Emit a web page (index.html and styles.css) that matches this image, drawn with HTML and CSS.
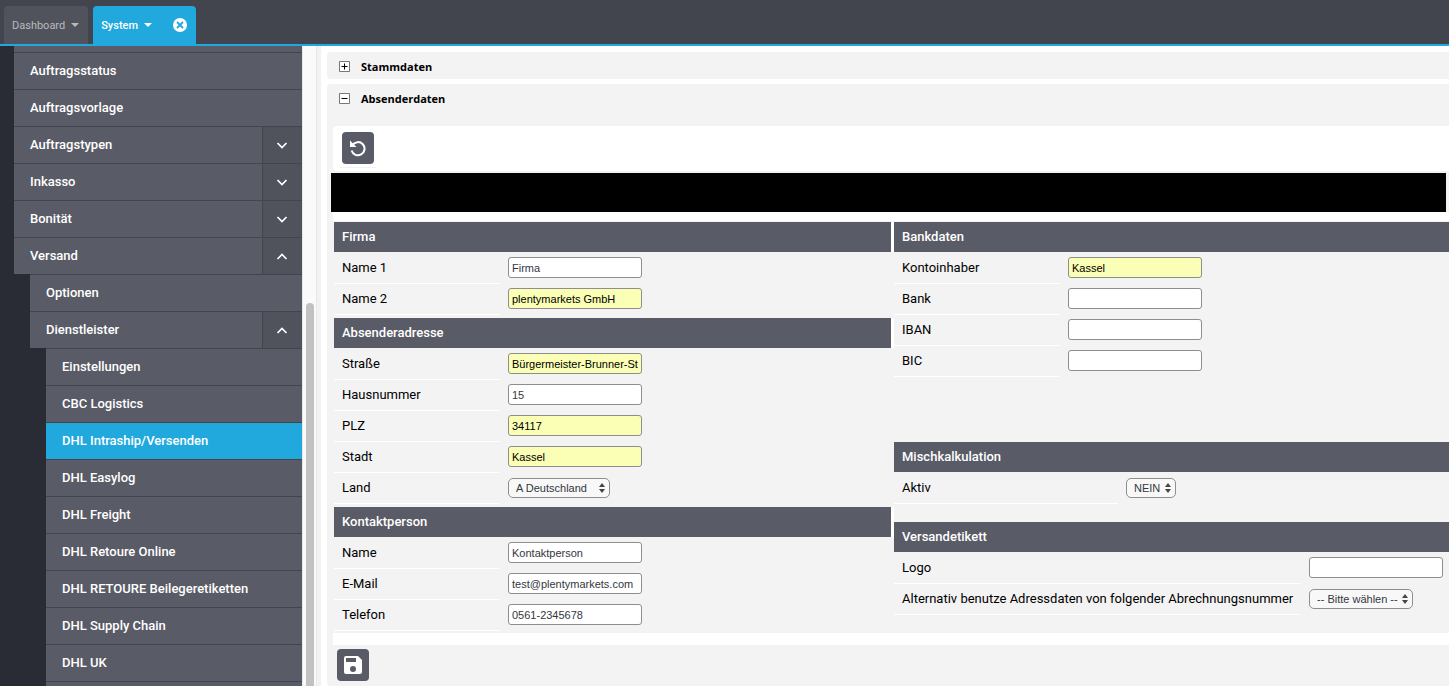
FILE: index.html
```html
<!DOCTYPE html>
<html lang="de">
<head>
    <meta charset="UTF-8">
    <meta name="viewport" content="width=device-width, initial-scale=1.0">
    <title>System - DHL Intraship/Versenden</title>
    <link rel="stylesheet" href="styles.css">
</head>
<body>
    <header class="tabs">
        <div class="tab">
            <button class="tab-label">Dashboard <span class="caret"></span></button>
        </div>
        <div class="tab active">
            <button class="tab-label">System <span class="caret"></span></button>
            <button class="tab-close" aria-label="Tab schließen">
                <svg width="14" height="14" viewBox="0 0 14 14"><circle cx="7" cy="7" r="7" fill="#fff"/><path d="M4 4l6 6M10 4l-6 6" stroke="#21a9de" stroke-width="1.8"/></svg>
            </button>
        </div>
    </header>

    <div class="layout">
        <nav class="sidebar">
            <ul class="menu">
                <li class="cut"></li>
                <li><div class="item"><a href="#">Auftragsstatus</a></div></li>
                <li><div class="item"><a href="#">Auftragsvorlage</a></div></li>
                <li><div class="item"><a href="#">Auftragstypen</a><button class="toggle" aria-label="Aufklappen"><svg width="12" height="8" viewBox="0 0 12 8"><path d="M1.500 2L6 6.500 10.500 2"/></svg></button></div></li>
                <li><div class="item"><a href="#">Inkasso</a><button class="toggle" aria-label="Aufklappen"><svg width="12" height="8" viewBox="0 0 12 8"><path d="M1.500 2L6 6.500 10.500 2"/></svg></button></div></li>
                <li><div class="item"><a href="#">Bonität</a><button class="toggle" aria-label="Aufklappen"><svg width="12" height="8" viewBox="0 0 12 8"><path d="M1.500 2L6 6.500 10.500 2"/></svg></button></div></li>
                <li>
                    <div class="item"><a href="#">Versand</a><button class="toggle" aria-label="Zuklappen"><svg width="12" height="8" viewBox="0 0 12 8"><path d="M1.500 7L6 2.500 10.500 7"/></svg></button></div>
                    <ul class="submenu">
                        <li><div class="item"><a href="#">Optionen</a></div></li>
                        <li>
                            <div class="item"><a href="#">Dienstleister</a><button class="toggle" aria-label="Zuklappen"><svg width="12" height="8" viewBox="0 0 12 8"><path d="M1.500 7L6 2.500 10.500 7"/></svg></button></div>
                            <ul class="submenu">
                                <li><div class="item"><a href="#">Einstellungen</a></div></li>
                                <li><div class="item"><a href="#">CBC Logistics</a></div></li>
                                <li><div class="item current"><a href="#">DHL Intraship/Versenden</a></div></li>
                                <li><div class="item"><a href="#">DHL Easylog</a></div></li>
                                <li><div class="item"><a href="#">DHL Freight</a></div></li>
                                <li><div class="item"><a href="#">DHL Retoure Online</a></div></li>
                                <li><div class="item"><a href="#">DHL RETOURE Beilegeretiketten</a></div></li>
                                <li><div class="item"><a href="#">DHL Supply Chain</a></div></li>
                                <li><div class="item"><a href="#">DHL UK</a></div></li>
                                <li class="item"></li>
                            </ul>
                        </li>
                    </ul>
                </li>
            </ul>
        </nav>
        <div class="scrollbar"><div class="thumb"></div></div>

        <main class="content">
            <section class="panel">
                <button class="panel-title">
                    <svg width="11" height="11" viewBox="0 0 11 11"><path d="M.5.5h10v10H.5z" fill="#fff" stroke="#777"/><path d="M2.500 5.500h6M5.500 2.500v6" stroke="#000"/></svg>
                    Stammdaten
                </button>
            </section>

            <section class="panel open">
                <button class="panel-title">
                    <svg width="11" height="11" viewBox="0 0 11 11"><path d="M.5.5h10v10H.5z" fill="#fff" stroke="#777"/><path d="M2.500 5.500h6" stroke="#000"/></svg>
                    Absenderdaten
                </button>

                <div class="toolbar">
                    <div class="tool">
                        <button class="icon-button" aria-label="Neu laden">
                            <svg width="18" height="18" viewBox="0 0 18 18"><path d="M3.500 6A6.600 6.600 0 1 1 2.600 11.500" fill="none" stroke="#fff" stroke-width="2"/><path d="M1 1.500v6.500h6.500z" fill="#fff"/></svg>
                        </button>
                    </div>
                </div>
                <div class="notice"></div>

                <form class="sender">
                    <div class="column">
                        <fieldset class="group">
                            <h2>Firma</h2>
                            <div class="row"><label for="name1">Name 1</label><input type="text" id="name1" value="Firma"></div>
                            <div class="row"><label for="name2">Name 2</label><input type="text" id="name2" class="filled" value="plentymarkets GmbH"></div>
                        </fieldset>
                        <fieldset class="group">
                            <h2>Absenderadresse</h2>
                            <div class="row"><label for="street">Straße</label><input type="text" id="street" class="filled" value="Bürgermeister-Brunner-St"></div>
                            <div class="row"><label for="number">Hausnummer</label><input type="text" id="number" value="15"></div>
                            <div class="row"><label for="zip">PLZ</label><input type="text" id="zip" class="filled" value="34117"></div>
                            <div class="row"><label for="city">Stadt</label><input type="text" id="city" class="filled" value="Kassel"></div>
                            <div class="row"><label for="country">Land</label><select id="country" class="country"><option>A Deutschland</option></select></div>
                        </fieldset>
                        <fieldset class="group">
                            <h2>Kontaktperson</h2>
                            <div class="row"><label for="contact">Name</label><input type="text" id="contact" value="Kontaktperson"></div>
                            <div class="row"><label for="email">E-Mail</label><input type="text" id="email" value="test@plentymarkets.com"></div>
                            <div class="row"><label for="phone">Telefon</label><input type="text" id="phone" value="0561-2345678"></div>
                        </fieldset>
                    </div>

                    <div class="column">
                        <fieldset class="group bank">
                            <h2>Bankdaten</h2>
                            <div class="row"><label for="owner">Kontoinhaber</label><input type="text" id="owner" class="filled" value="Kassel"></div>
                            <div class="row"><label for="bank">Bank</label><input type="text" id="bank"></div>
                            <div class="row"><label for="iban">IBAN</label><input type="text" id="iban"></div>
                            <div class="row"><label for="bic">BIC</label><input type="text" id="bic"></div>
                        </fieldset>
                        <fieldset class="group mixed">
                            <h2>Mischkalkulation</h2>
                            <div class="row"><label for="active">Aktiv</label><select id="active" class="active-select"><option>NEIN</option></select></div>
                        </fieldset>
                        <fieldset class="group shipping-label">
                            <h2>Versandetikett</h2>
                            <div class="row"><label for="logo">Logo</label><input type="text" id="logo"></div>
                            <div class="row"><label for="account">Alternativ benutze Adressdaten von folgender Abrechnungsnummer</label><select id="account" class="account"><option>-- Bitte wählen --</option></select></div>
                        </fieldset>
                    </div>
                </form>

                <div class="actions">
                    <button class="icon-button" aria-label="Speichern">
                        <svg width="18" height="18" viewBox="0 0 18 18"><path fill="#fff" fill-rule="evenodd" d="M2 0h12l4 4v12a2 2 0 0 1-2 2H2a2 2 0 0 1-2-2V2a2 2 0 0 1 2-2zM2 2v4h10V2zM9 10a3 3 0 1 0 0 6 3 3 0 0 0 0-6z"/></svg>
                    </button>
                </div>
            </section>
        </main>
    </div>
</body>
</html>
```
FILE: styles.css
```css
* {
    box-sizing: border-box;
}

body {
    margin: 0;
    height: 100vh;
    display: flex;
    flex-direction: column;
    overflow: hidden;
    font-family: Roboto, sans-serif;
    font-size: 13px;
    color: #000;
    background-color: #fff;
}

button {
    border: none;
    padding: 0;
    background: none;
    font: inherit;
    color: inherit;
    cursor: pointer;
}

ul {
    list-style: none;
    margin: 0;
    padding: 0;
}

/* tabs */
.tabs {
    flex: none;
    display: flex;
    gap: 5px;
    height: 46px;
    padding: 6px 4px 0;
    background-color: #42454e;
    border-bottom: 2px solid #21a9de;
}

.tab {
    display: flex;
    align-items: center;
    justify-content: space-between;
    gap: 21px;
    padding: 0 9px 0 8px;
    border-radius: 4px 4px 0 0;
    background-color: #50535b;
    color: #b9babd;
    font-size: 11px;
}

.tab.active {
    background-color: #21a9de;
    color: #fff;
    font-weight: 500;
}

.tab-label {
    display: flex;
    align-items: center;
    gap: 6px;
}

.caret {
    border: 4px solid transparent;
    border-top-color: currentColor;
    border-bottom: none;
}

.tab-close {
    display: flex;
}

/* sidebar */
.layout {
    flex: 1;
    min-height: 0;
    display: flex;
}

.sidebar {
    flex: none;
    width: 302px;
    padding-left: 14px;
    overflow: hidden;
    background-color: #292c34;
}

.submenu {
    margin-left: 16px;
}

.cut {
    height: 6px;
    background-color: #595b66;
}

.item {
    display: flex;
    height: 37px;
    border-top: 1px solid #42454e;
    background-color: #595b66;
}

.item a {
    flex: 1;
    padding-left: 16px;
    line-height: 35px;
    color: #fff;
    font-weight: 500;
    text-decoration: none;
}

.item.current {
    background-color: #21a9de;
}

.toggle {
    display: flex;
    align-items: center;
    justify-content: center;
    width: 40px;
    padding-right: 1px;
    border-left: 1px solid #42454e;
    background-color: #50535b;
}

.toggle path {
    fill: none;
    stroke: #fff;
    stroke-width: 1.7;
}

.scrollbar {
    flex: none;
    width: 19px;
    padding: 257px 7px 0 3px;
    border-left: 1px solid #e8e8e8;
    background: linear-gradient(to right, #fafafa 13px, #e8e8e8 13px, #e8e8e8 14px, #f2f2f2 14px);
}

.thumb {
    height: 100%;
    border-radius: 4px 4px 0 0;
    background-color: #c1c1c1;
}

/* content */
.content {
    flex: 1;
    min-width: 0;
    display: flex;
    flex-direction: column;
    gap: 5px;
    padding: 6px 0 0 6px;
}

.panel {
    border-radius: 4px 0 0 4px;
    background-color: #f3f3f3;
}

.panel.open {
    flex: 1;
}

.panel-title {
    display: flex;
    align-items: center;
    gap: 11px;
    width: 100%;
    height: 27px;
    padding: 2px 0 0 12px;
    font-family: "Open Sans", sans-serif;
    font-size: 11px;
    font-weight: 700;
}

.toolbar {
    display: flex;
    margin: 15px 0 0 6px;
    padding: 6px 6px 3px;
    border-radius: 4px 0 0 4px;
    background-color: #fff;
}

.tool {
    padding: 0 3px 3px;
    border-bottom: 1px solid #f3f3f3;
}

.icon-button {
    display: flex;
    align-items: center;
    justify-content: center;
    width: 32px;
    height: 32px;
    border-radius: 4px;
    background-color: #595b66;
}

.notice {
    height: 39px;
    margin: 2px 3px 0 4px;
    background-color: #000;
}

.sender {
    display: grid;
    grid-template-columns: 557fr 555fr;
    gap: 3px;
    margin-left: 6px;
    padding-left: 1px;
    border-top: 9px solid #fff;
    border-bottom: 12px solid #fff;
}

.group {
    min-width: 0;
    margin: 0;
    padding: 1px 0 2px;
    border: none;
}

.group h2 {
    margin: 0 0 1px;
    padding-left: 8px;
    line-height: 30px;
    background-color: #595b66;
    box-shadow: 3px 0 0 #fff;
    color: #fff;
    font-size: 13px;
    font-weight: 500;
}

.row {
    display: flex;
    gap: 8px;
    height: 31px;
}

.row label {
    width: 166px;
    padding-left: 8px;
    line-height: 29px;
    border-bottom: 1px solid #fff;
}

.bank {
    margin-bottom: 62px;
}

.mixed {
    margin-bottom: 15px;
}

.mixed label {
    width: 224px;
}

.shipping-label label {
    width: 407px;
}

input,
select {
    margin: 4px 0 0;
    border: 1px solid #8e8e8e;
    background-color: #fff;
    color: #333740;
    font-family: "Liberation Sans", Arial, sans-serif;
    font-size: 11px;
}

input {
    width: 134px;
    height: 21px;
    padding: 1px 3px 0;
    border-radius: 3px;
}

.filled {
    background-color: #faffb5;
    color: #000;
}

select {
    appearance: none;
    height: 20px;
    margin-top: 5px;
    padding: 0 7px;
    border-radius: 5px;
    background: #f8f8f8 url("data:image/svg+xml,%3Csvg xmlns='http://www.w3.org/2000/svg' width='6' height='10'%3E%3Cpath d='M3 0l3 4H0zM3 10l3-4H0z' fill='%23444'/%3E%3C/svg%3E") no-repeat right 4px center;
}

.country {
    width: 102px;
}

.active-select {
    width: 50px;
}

.account {
    width: 104px;
}

.actions {
    padding: 4px 10px;
}
```
